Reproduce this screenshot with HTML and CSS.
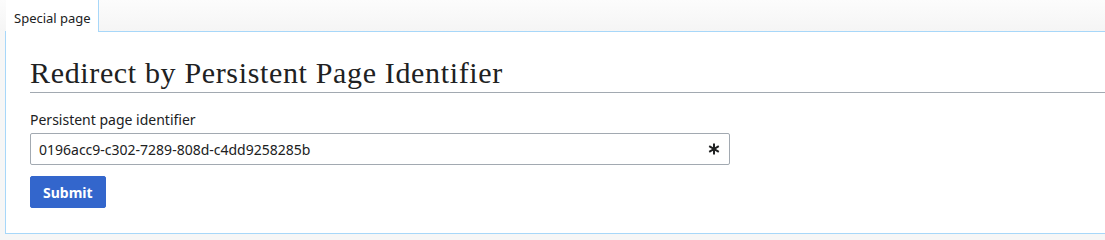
FILE: index.html
```html
<!DOCTYPE html>
<html lang="en">
<head>
<meta charset="utf-8">
<title>Redirect by Persistent Page Identifier</title>
<link rel="stylesheet" href="styles.css">
</head>
<body>
<div class="tabs">
  <div class="tab">Special page</div>
</div>
<div class="content">
  <h1 class="heading">Redirect by Persistent Page Identifier</h1>
  <form class="form">
    <label class="label" for="ppid">Persistent page identifier</label>
    <div class="input-wrap">
      <input class="input" id="ppid" type="text" value="0196acc9-c302-7289-808d-c4dd9258285b">
      <svg class="required" width="12" height="12" viewBox="0 0 12 12" aria-hidden="true">
        <path d="M6 0.5v11M1.2 3.2l9.6 5.6M1.2 8.8l9.6-5.6" stroke="#202122" stroke-width="2" fill="none"/>
      </svg>
    </div>
    <button class="button" type="button">Submit</button>
  </form>
</div>
</body>
</html>
```

FILE: styles.css
```css
html, body {
  margin: 0;
  padding: 0;
}
body {
  background: #f6f6f6;
  font-family: "Noto Sans", "Open Sans", sans-serif;
  color: #202122;
  height: 238px;
  overflow: hidden;
}
.tabs {
  display: flex;
  height: 31px;
  padding-left: 6px;
  background: linear-gradient(to bottom, #fcfcfc 0%, #f5f5f5 100%);
}
.tab {
  box-sizing: border-box;
  width: 93px;
  height: 32px;
  background: #fff;
  border-right: 1px solid #a7d7f9;
  font-size: 13px;
  line-height: 36px;
  padding-left: 8px;
  color: #202122;
  position: relative;
  z-index: 1;
}
.content {
  margin-left: 5px;
  background: #fff;
  border-top: 1px solid #a7d7f9;
  border-left: 1px solid #a7d7f9;
  border-bottom: 1px solid #a7d7f9;
  height: 203px;
  box-sizing: border-box;
  padding: 23px 0 0 24px;
}
.heading {
  margin: 0;
  font-family: "Liberation Serif", "DejaVu Serif", serif;
  font-weight: normal;
  font-size: 30px;
  letter-spacing: 0.65px;
  line-height: 36px;
  padding-bottom: 1px;
  color: #202122;
  border-bottom: 1px solid #a2a9b1;
}
.form {
  display: flex;
  flex-direction: column;
  align-items: flex-start;
  padding-top: 16px;
}
.label {
  font-size: 14px;
  line-height: 22px;
  color: #202122;
  margin-bottom: 2px;
}
.input-wrap {
  position: relative;
  width: 700px;
}
.input {
  box-sizing: border-box;
  width: 700px;
  height: 32px;
  border: 1px solid #a2a9b1;
  border-radius: 2px;
  padding: 0 32px 0 8px;
  font-family: "Noto Sans", "Open Sans", sans-serif;
  font-size: 14px;
  color: #202122;
  background: #fff;
  outline: none;
  display: block;
}
.required {
  position: absolute;
  right: 10px;
  top: 10px;
}
.button {
  margin-top: 11px;
  box-sizing: border-box;
  height: 32px;
  padding: 0 12px;
  background: #36c;
  border: 1px solid #36c;
  border-radius: 2px;
  color: #fff;
  font-family: "Noto Sans", "Open Sans", sans-serif;
  font-size: 14px;
  font-weight: bold;
}
```
